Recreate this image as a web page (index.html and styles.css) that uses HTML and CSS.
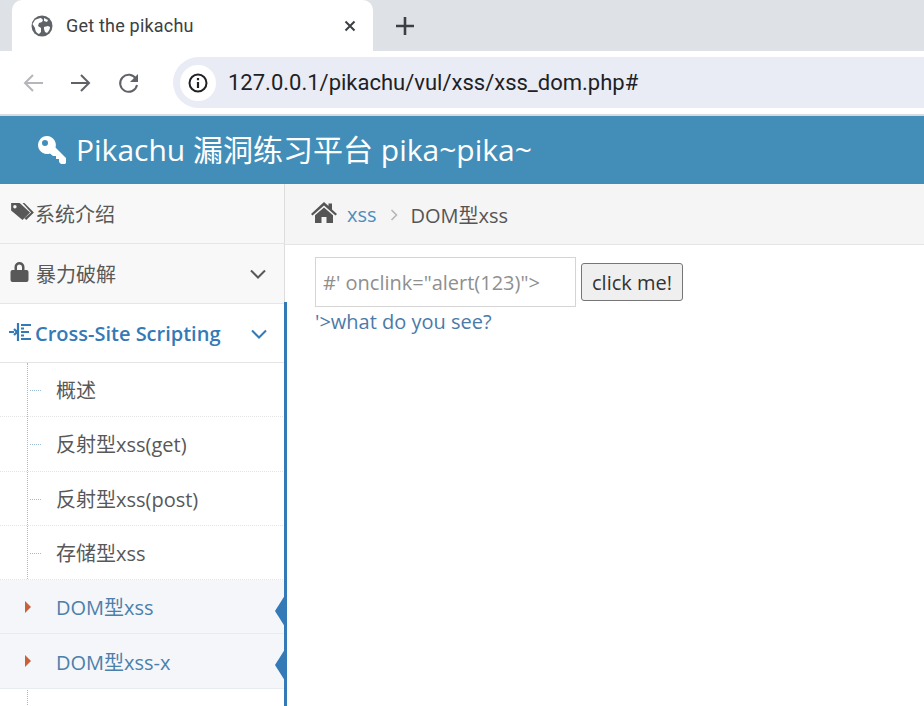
FILE: index.html
```html
<!DOCTYPE html>
<html lang="zh">
<head>
<meta charset="utf-8">
<title>Get the pikachu</title>
<link rel="stylesheet" href="styles.css">
</head>
<body>
<div class="tabstrip">
  <div class="tab">
    <svg class="globe" viewBox="0 0 22 22"><circle cx="11" cy="11" r="10.5" fill="#5f6368"/><path d="M4 5c2-1 4-2 6-2l2 2-1 2-3 1-1 3 3 2v4l-2 2c-3-1-4-4-4-6L1.500 9zM13 12l4-1 2 1c0 2-1 4-3 6l-2-1-1-3z" fill="#fff"/><path d="M13 3l4 2-1 2-3-1z" fill="#fff"/></svg>
    <span class="tab-title">Get the pikachu</span>
    <svg class="tab-close" viewBox="0 0 12 12"><path d="M1.500 1.500l9 9M10.500 1.500l-9 9" stroke="#3c4043" stroke-width="2" fill="none"/></svg>
  </div>
  <svg class="newtab" viewBox="0 0 18 18"><path d="M9 0v18M0 9h18" stroke="#3c4043" stroke-width="2.600" fill="none"/></svg>
</div>
<div class="toolbar">
  <svg class="nav" viewBox="0 0 22 22"><path d="M21 11H3M11 3l-8 8 8 8" stroke="#b4b6b9" stroke-width="2" fill="none"/></svg>
  <svg class="nav" viewBox="0 0 22 22"><path d="M1 11h18M11 3l8 8-8 8" stroke="#5f6368" stroke-width="2" fill="none"/></svg>
  <svg class="nav" viewBox="0 0 22 22"><path d="M18 7a8.500 8.500 0 1 0 1 6" stroke="#5f6368" stroke-width="2" fill="none"/><path d="M20 2v8h-8z" fill="#5f6368"/></svg>
  <div class="omnibox">
    <span class="info-badge"><svg class="info" viewBox="0 0 20 20"><circle cx="10" cy="10" r="8.500" stroke="#202124" stroke-width="2" fill="none"/><path d="M10 9v6M10 5v2.200" stroke="#202124" stroke-width="2.200" fill="none"/></svg></span>
    <span class="url">127.0.0.1/pikachu/vul/xss/xss_dom.php#</span>
  </div>
</div>
<header class="navbar">
  <svg class="key" viewBox="0 0 30 30"><path fill-rule="evenodd" d="M10 1a9 9 0 0 1 8.500 11.500L29 23v5l-1 1h-4l-2-2v-3h-3v-3h-3l-3-2.500A9 9 0 1 1 10 1zM8 5a3 3 0 1 0 0 6 3 3 0 0 0 0-6z" fill="#fff"/></svg>
  <span class="brand">Pikachu 漏洞练习平台 pika~pika~</span>
</header>
<div class="main">
  <nav class="sidebar">
    <div class="menu-item flat"><svg class="mi-icon tag" viewBox="0 0 26 20"><path d="M1 1h9l11 10-8 8L1 9z" fill="#585858"/><path d="M13 1h2l10 10-8 8-2-2 7-6z" fill="#585858"/><circle cx="5" cy="5" r="1.800" fill="#f8f8f8"/></svg><span class="tight">系统介绍</span></div>
    <div class="menu-item flat"><svg class="mi-icon lock" viewBox="0 0 18 20"><path fill-rule="evenodd" d="M4 8V5a5 5 0 0 1 10 0v3h2a2 2 0 0 1 2 2v8a2 2 0 0 1-2 2H2a2 2 0 0 1-2-2v-8a2 2 0 0 1 2-2zM6.500 8h5V5a2.500 2.500 0 0 0-5 0z" fill="#585858"/></svg><span>暴力破解</span><svg class="chev" viewBox="0 0 16 10"><path d="M1 1.500l7 7 7-7" stroke="#585858" stroke-width="2" fill="none"/></svg></div>
    <div class="menu-item open"><svg class="mi-icon list" viewBox="0 0 22 20"><path d="M0 10h5M5 7l3 3-3 3M9 1v18M12 3h10M12 10h8M12 17h10M12 6.500h3M12 13.500h3" stroke="#337ab7" stroke-width="2.200" fill="none"/></svg><span class="bold">Cross-Site Scripting</span><svg class="chev" viewBox="0 0 16 10"><path d="M1 1.500l7 7 7-7" stroke="#337ab7" stroke-width="2" fill="none"/></svg></div>
    <ul class="submenu">
      <li class="sub">概述</li>
      <li class="sub">反射型xss(get)</li>
      <li class="sub">反射型xss(post)</li>
      <li class="sub">存储型xss</li>
      <li class="sub active">DOM型xss</li>
      <li class="sub active">DOM型xss-x</li>
      <li class="sub">xss之盲打</li>
    </ul>
  </nav>
  <main class="content">
    <div class="breadcrumb">
      <svg class="home" viewBox="0 0 26 21"><path d="M13 0l4.500 4V1.500h3.500v6L26 12l-1.500 1.500L13 3.500 1.500 13.500 0 12z" fill="#555"/><path d="M13 5.500l9 7.800V21h-6.500v-6h-5v6H4v-7.700z" fill="#555"/></svg>
      <a class="crumb-link" href="#">xss</a>
      <svg class="crumb-sep" viewBox="0 0 8 12"><path d="M1.500 1l5 5-5 5" stroke="#b5b5b5" stroke-width="1.500" fill="none"/></svg>
      <span class="crumb-current">DOM型xss</span>
    </div>
    <div class="page">
      <div class="form-row">
        <input class="text-input" type="text" placeholder="#' onclink=&quot;alert(123)&quot;>">
        <button class="btn" type="button">click me!</button>
      </div>
      <a class="see" href="#">'&gt;what do you see?</a>
    </div>
  </main>
</div>
</body>
</html>
```

FILE: styles.css
```css
* { box-sizing: border-box; }
html, body { margin: 0; padding: 0; height: 706px; overflow: hidden; background: #fff; }
body { font-family: "Open Sans", "Noto Sans CJK SC", sans-serif; color: #585858; font-size: 20px; }

.tabstrip { height: 51px; background: #dee1e6; display: flex; align-items: flex-end; padding-left: 12px; }
.tab { width: 361px; height: 51px; background: #fff; border-radius: 10px 10px 0 0; display: flex; align-items: center; padding: 0 17px 0 19px; }
.globe { width: 22px; height: 22px; flex: none; }
.tab-title { margin-left: 13px; flex: 1; font: 18px "Roboto", sans-serif; color: #3c4043; letter-spacing: .2px; }
.tab-close { width: 12px; height: 12px; }
.newtab { width: 18px; height: 18px; margin: 0 0 16px 23px; }

.toolbar { height: 63px; background: #fff; display: flex; align-items: center; padding-left: 22px; border-bottom: 0; }
.nav { width: 22px; height: 22px; margin-right: 26px; flex: none; }
.omnibox { flex: 1; height: 51px; margin-left: 7px; background: #e9ecf5; border-radius: 26px 0 0 26px; display: flex; align-items: center; padding-left: 7px; }
.info-badge { width: 36px; height: 36px; border-radius: 50%; background: #fff; display: flex; align-items: center; justify-content: center; }
.info { width: 20px; height: 20px; }
.url { margin-left: 12px; font: 22px "Roboto", sans-serif; color: #202124; }

.navbar { height: 70px; background: #438eb9; border-top: 2px solid #d6dbe6; display: flex; align-items: center; padding-left: 37px; color: #fff; }
.key { width: 30px; height: 30px; flex: none; }
.brand { margin-left: 9px; font-size: 30px; line-height: 1; }

.main { display: flex; height: 522px; }
.sidebar { width: 287px; flex: none; position: relative; }
.sidebar::after { content: ""; position: absolute; right: 0; top: 118px; bottom: 0; width: 3px; background: #337ab7; z-index: 2; }
.menu-item { height: 60px; display: flex; align-items: center; padding-left: 10px; border-bottom: 1px solid #e5e5e5; width: 285px; position: relative; }
.menu-item.flat { background: #f8f8f8; border-right: 1px solid #ddd; }
.menu-item.open { color: #337ab7; height: 59px; }
.mi-icon { flex: none; }
.tag { width: 25px; height: 19px; margin-top: -4px; }
.tight { margin-left: 0; }
.lock { width: 19px; height: 20px; margin-right: 7px; margin-top: -3px; }
.list { width: 22px; height: 20px; margin-left: -1px; margin-right: 4px; margin-top: -2px; }
.bold { font-weight: 600; }
.chev { position: absolute; right: 18px; top: 25px; width: 16px; height: 10px; }

.submenu { list-style: none; margin: 0; padding: 0; width: 285px; position: relative; }
.submenu::before { content: ""; position: absolute; left: 27px; top: 0; bottom: 0; border-left: 1px dotted #9dbdd6; }
.sub { height: 54.300px; display: flex; align-items: center; padding-left: 56px; border-bottom: 1px dotted #e4e4e4; position: relative; }
.sub::before { content: ""; position: absolute; left: 30px; top: 27px; width: 11px; border-top: 1px dotted #9dbdd6; }
.sub.active { background: #f4f6f9; color: #4b80ac; border-bottom: 1px solid #e8ebf0; }
.sub.active::before { left: 25px; top: 21px; width: 0; border: 0; border-left: 6px solid #c86139; border-top: 6px solid transparent; border-bottom: 6px solid transparent; }
.sub.active::after { content: ""; position: absolute; right: -2px; top: 12px; border-right: 12px solid #337ab7; border-top: 19px solid transparent; border-bottom: 19px solid transparent; }

.content { flex: 1; min-width: 0; margin-left: -2px; }
.breadcrumb { height: 61px; background: #f5f5f5; border-bottom: 1px solid #e5e5e5; display: flex; align-items: center; padding-left: 26px; }
.home { width: 26px; height: 21px; margin-top: -4px; }
.crumb-link { margin-left: 10px; color: #4c8fbd; text-decoration: none; }
.crumb-sep { width: 8px; height: 12px; margin: 2px 0 0 13px; }
.crumb-current { margin-left: 13px; color: #555; }

.page { padding: 12px 0 0 30px; }
.form-row { display: flex; align-items: center; gap: 5px; }
.text-input { width: 261px; height: 50px; padding: 0 7px; border: 1px solid #d5d5d5; background: #fff; font: 20px "Open Sans", sans-serif; }
.text-input::placeholder { color: #8f8f8f; opacity: 1; }
.btn { width: 102px; height: 38px; padding: 0; border: 1px solid #767676; border-radius: 3px; background: #efefef; color: #333; font: 20px "Open Sans", sans-serif; }
.see { display: block; margin-top: 1px; color: #4b7aa8; text-decoration: none; line-height: 28px; }
```
